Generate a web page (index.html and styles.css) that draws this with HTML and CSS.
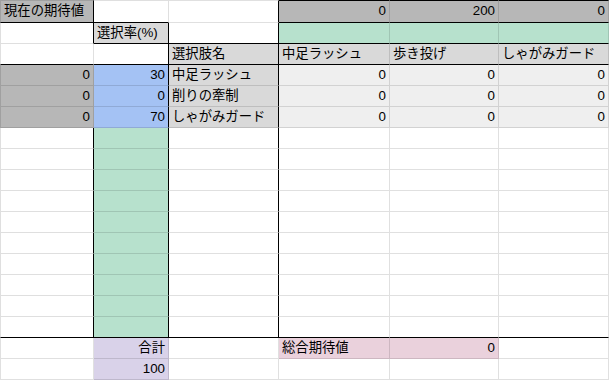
FILE: index.html
```html
<!DOCTYPE html>
<html lang="ja">
<head>
<meta charset="utf-8">
<title>期待値シート</title>
<link rel="stylesheet" href="styles.css">
</head>
<body>
<div class="sheet">
  <!-- row 1 -->
  <div class="c top fill-dark br bb">現在の期待値</div>
  <div class="c top bb"></div>
  <div class="c top br"></div>
  <div class="c top top-k fill-dark bb num">0</div>
  <div class="c top top-k fill-dark bb num">200</div>
  <div class="c top top-k fill-dark bb num">0</div>
  <!-- row 2 -->
  <div class="c br"></div>
  <div class="c fill-light br bb">選択率(%)</div>
  <div class="c br bb"></div>
  <div class="c fill-green bb"></div>
  <div class="c fill-green bb"></div>
  <div class="c fill-green bb"></div>
  <!-- row 3 -->
  <div class="c bb"></div>
  <div class="c br bb"></div>
  <div class="c fill-light br bb">選択肢名</div>
  <div class="c fill-light bb">中足ラッシュ</div>
  <div class="c fill-light bb">歩き投げ</div>
  <div class="c fill-light bb">しゃがみガード</div>
  <!-- rows 4-6 -->
  <div class="c fill-dark num">0</div>
  <div class="c fill-blue br num">30</div>
  <div class="c fill-light br">中足ラッシュ</div>
  <div class="c fill-pale num">0</div>
  <div class="c fill-pale num">0</div>
  <div class="c fill-pale num">0</div>

  <div class="c fill-dark num">0</div>
  <div class="c fill-blue br num">0</div>
  <div class="c fill-light br">削りの牽制</div>
  <div class="c fill-pale num">0</div>
  <div class="c fill-pale num">0</div>
  <div class="c fill-pale num">0</div>

  <div class="c fill-dark num">0</div>
  <div class="c fill-blue br num">70</div>
  <div class="c fill-light br">しゃがみガード</div>
  <div class="c fill-pale num">0</div>
  <div class="c fill-pale num">0</div>
  <div class="c fill-pale num">0</div>
  <!-- rows 7-15 -->
  <div class="c br"></div><div class="c fill-green br"></div><div class="c br"></div><div class="c"></div><div class="c"></div><div class="c"></div>
  <div class="c br"></div><div class="c fill-green br"></div><div class="c br"></div><div class="c"></div><div class="c"></div><div class="c"></div>
  <div class="c br"></div><div class="c fill-green br"></div><div class="c br"></div><div class="c"></div><div class="c"></div><div class="c"></div>
  <div class="c br"></div><div class="c fill-green br"></div><div class="c br"></div><div class="c"></div><div class="c"></div><div class="c"></div>
  <div class="c br"></div><div class="c fill-green br"></div><div class="c br"></div><div class="c"></div><div class="c"></div><div class="c"></div>
  <div class="c br"></div><div class="c fill-green br"></div><div class="c br"></div><div class="c"></div><div class="c"></div><div class="c"></div>
  <div class="c br"></div><div class="c fill-green br"></div><div class="c br"></div><div class="c"></div><div class="c"></div><div class="c"></div>
  <div class="c br"></div><div class="c fill-green br"></div><div class="c br"></div><div class="c"></div><div class="c"></div><div class="c"></div>
  <div class="c br"></div><div class="c fill-green br"></div><div class="c br"></div><div class="c"></div><div class="c"></div><div class="c"></div>
  <!-- row 16 -->
  <div class="c br bb"></div>
  <div class="c fill-green br bb"></div>
  <div class="c br bb"></div>
  <div class="c bb"></div>
  <div class="c bb"></div>
  <div class="c bb"></div>
  <!-- row 17 -->
  <div class="c"></div>
  <div class="c fill-purple num">合計</div>
  <div class="c"></div>
  <div class="c fill-pink">総合期待値</div>
  <div class="c fill-pink num">0</div>
  <div class="c"></div>
  <!-- row 18 -->
  <div class="c"></div>
  <div class="c fill-purple num">100</div>
  <div class="c"></div>
  <div class="c"></div>
  <div class="c"></div>
  <div class="c"></div>
</div>
</body>
</html>
```

FILE: styles.css
```css
html, body {
  margin: 0;
  padding: 0;
  background: #ffffff;
}

.sheet {
  display: grid;
  grid-template-columns: 94px 75px 110px 111px 109px 110px;
  grid-template-rows: 23px repeat(17, 21px);
  width: 609px;
  font-family: "Liberation Sans", "Noto Sans CJK JP", sans-serif;
  font-size: 13.33px;
  color: #000000;
}

/* every cell draws its own right and bottom gridline */
.c {
  box-sizing: border-box;
  border-right: 1px solid rgba(0, 0, 0, 0.12);
  border-bottom: 1px solid rgba(0, 0, 0, 0.12);
  padding: 0 3px;
  line-height: 20px;
  white-space: nowrap;
  overflow: hidden;
}

/* first column carries the sheet's left edge */
.c:nth-child(6n + 1) {
  border-left: 1px solid rgba(0, 0, 0, 0.12);
}

/* first row carries the sheet's top edge */
.top {
  border-top: 1px solid rgba(0, 0, 0, 0.12);
}

.top-k {
  border-top-color: #000000;
}

.br {
  border-right-color: #000000;
}

.bb {
  border-bottom-color: #000000;
}

.num {
  text-align: right;
}

.fill-dark {
  background: #b7b7b7;
}

.fill-light {
  background: #d9d9d9;
}

.fill-pale {
  background: #efefef;
}

.fill-blue {
  background: #a4c2f4;
}

.fill-green {
  background: #b7e1cd;
}

.fill-purple {
  background: #d9d2e9;
}

.fill-pink {
  background: #ead1dc;
}
```
